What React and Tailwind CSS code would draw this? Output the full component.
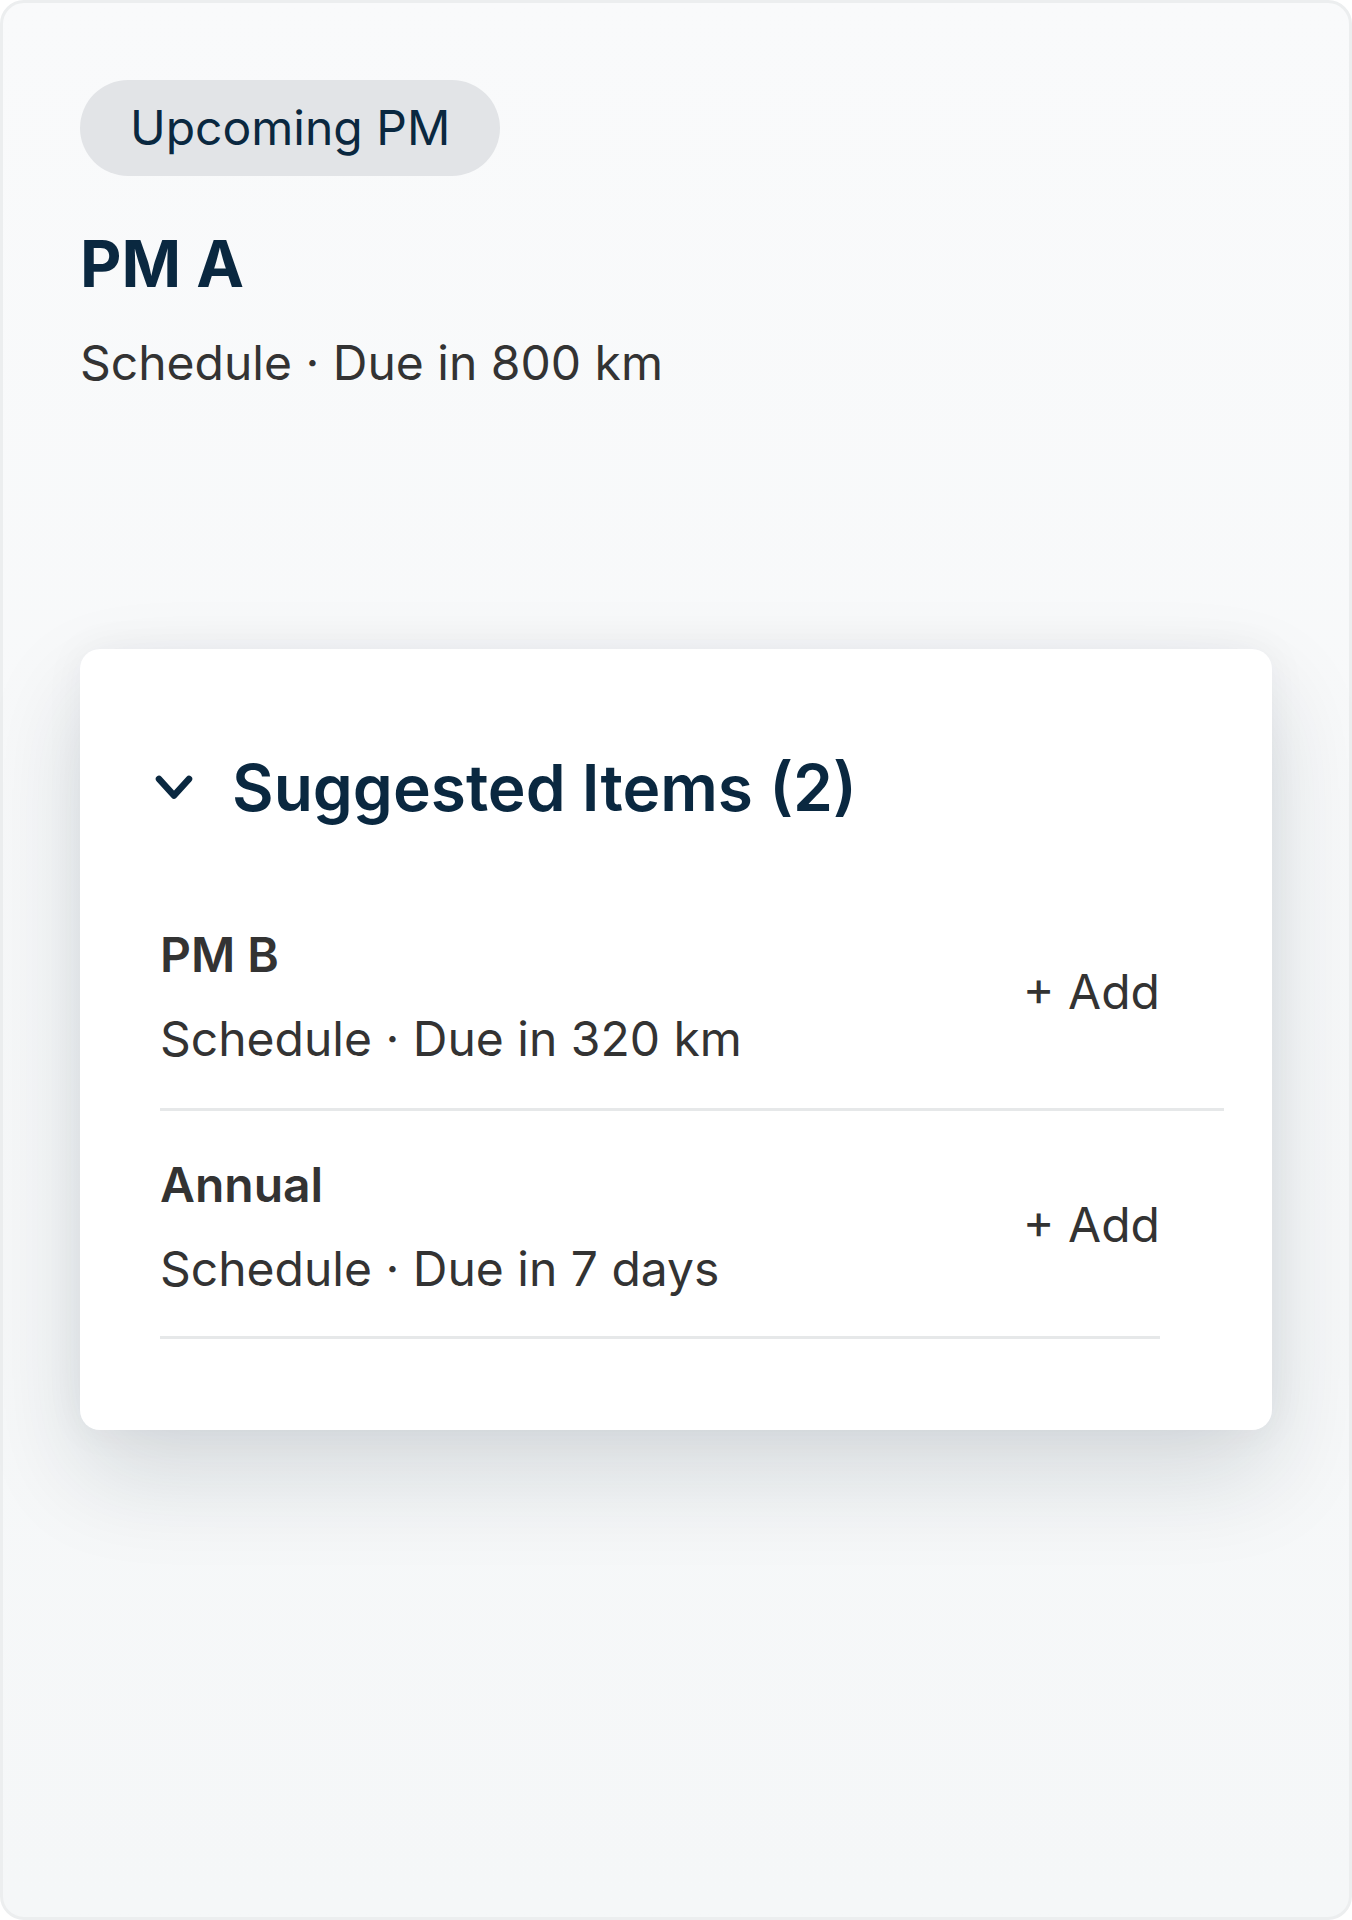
import React from "react";

function Chevron() {
  return (
    <svg
      width="40"
      height="28"
      viewBox="0 0 40 28"
      fill="none"
      className="-ml-[6px] shrink-0"
    >
      <path
        d="M5 5 L20 21.5 L35 5"
        stroke="#0a2840"
        strokeWidth="6.5"
        strokeLinecap="round"
        strokeLinejoin="round"
      />
    </svg>
  );
}

export default function App() {
  return (
    <div className="w-[1352px] h-[1920px] bg-white font-['Inter','Noto_Sans',sans-serif]">
      <div className="h-full rounded-[24px] border-[3px] border-[#eceeef] bg-linear-to-b from-[#f9fafb] to-[#f5f7f8] px-[77px] pt-[77px]">
        <div className="flex flex-col items-start">
          <div className="flex h-[96px] items-center rounded-full bg-[#e2e4e7] px-[50px] text-[48px] leading-[60px] text-[#0a2840]">
            Upcoming PM
          </div>
          <div className="mt-[50px] text-[64px] leading-[1.2] font-bold text-[#0a2840]">
            PM A
          </div>
          <div className="mt-[30px] text-[48px] leading-[60px] text-[#333333]">
            Schedule · Due in 800 km
          </div>
        </div>

        <div className="mt-[256px] rounded-[20px] bg-white pl-[80px] pr-[48px] pt-[101px] pb-[91px] shadow-[0_44px_100px_rgba(17,38,50,0.14),0_0_40px_rgba(17,38,50,0.05)]">
          <div className="flex items-center gap-[38px]">
            <Chevron />
            <div className="text-[64px] leading-[1.2] font-semibold text-[#0a2840]">
              Suggested Items (2)
            </div>
          </div>
          <div className="mt-[52px]">
            <div className="flex items-center justify-between border-b-[3px] border-[#e6e8e9] pt-[46px] pb-[39px]">
              <div className="flex flex-col gap-[24px]">
                <div className="text-[48px] leading-[60px] font-semibold text-[#333333]">
                  PM B
                </div>
                <div className="text-[48px] leading-[60px] text-[#333333]">
                  Schedule · Due in 320 km
                </div>
              </div>
              <div className="mb-[10px] pr-[64px] text-[48px] leading-[60px] text-[#333333]">
                + Add
              </div>
            </div>
            <div className="mr-[64px] flex items-center justify-between border-b-[3px] border-[#e6e8e9] pt-[44px] pb-[37px]">
              <div className="flex flex-col gap-[24px]">
                <div className="text-[48px] leading-[60px] font-semibold text-[#333333]">
                  Annual
                </div>
                <div className="text-[48px] leading-[60px] text-[#333333]">
                  Schedule · Due in 7 days
                </div>
              </div>
              <div className="mb-[4px] text-[48px] leading-[60px] text-[#333333]">
                + Add
              </div>
            </div>
          </div>
        </div>
      </div>
    </div>
  );
}
